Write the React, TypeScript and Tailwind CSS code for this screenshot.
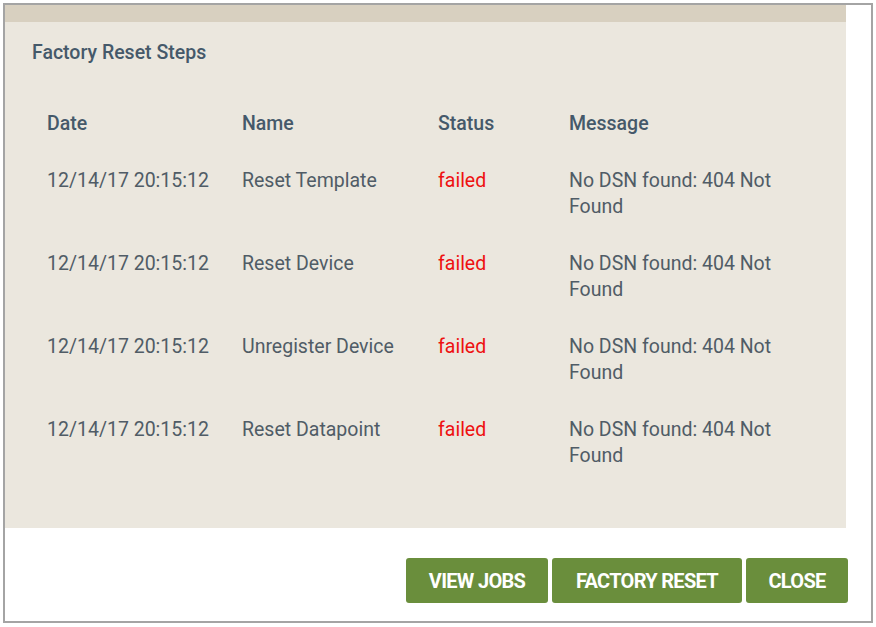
const rows = [
  { date: '12/14/17 20:15:12', name: 'Reset Template', status: 'failed', message: 'No DSN found: 404 Not Found' },
  { date: '12/14/17 20:15:12', name: 'Reset Device', status: 'failed', message: 'No DSN found: 404 Not Found' },
  { date: '12/14/17 20:15:12', name: 'Unregister Device', status: 'failed', message: 'No DSN found: 404 Not Found' },
  { date: '12/14/17 20:15:12', name: 'Reset Datapoint', status: 'failed', message: 'No DSN found: 404 Not Found' },
];

export default function App() {
  return (
    <div className="w-[876px] h-[627px] bg-white pt-[3px] pl-[3px] font-['Roboto',sans-serif]">
      <div className="w-[870px] h-[620px] border-2 border-[#a4a4a4] flex flex-col">
        <div className="h-[17px] w-[841px] bg-[#d8d0c0]" />
        <div className="w-[841px] h-[506px] bg-[#ebe7de] pt-[19px]">
          <h2 className="pl-[27px] text-[19.5px] leading-[24px] font-medium text-[#45596a]">Factory Reset Steps</h2>

          <div className="mt-[46px] pl-[42px] grid grid-cols-[195px_196px_131px_218px] text-[19.5px] leading-[26px]">
            <div className="font-medium text-[#45596a]">Date</div>
            <div className="font-medium text-[#45596a]">Name</div>
            <div className="font-medium text-[#45596a]">Status</div>
            <div className="font-medium text-[#45596a]">Message</div>
          </div>

          <div className="mt-[31px] pl-[42px] flex flex-col gap-[31px]">
            {rows.map((row) => (
              <div key={row.name} className="grid grid-cols-[195px_196px_131px_218px] text-[19.5px] leading-[26px] text-[#505c66]">
                <div>{row.date}</div>
                <div>{row.name}</div>
                <div className="text-[#ee1111]">{row.status}</div>
                <div>{row.message}</div>
              </div>
            ))}
          </div>
        </div>

        <div className="w-[843px] flex justify-end gap-[4px] pt-[30px]">
          <button className="w-[142px] h-[45px] rounded-[3px] bg-[#6a8e3c] text-white font-bold text-[20px] tracking-[-0.7px]">VIEW JOBS</button>
          <button className="w-[190px] h-[45px] rounded-[3px] bg-[#6a8e3c] text-white font-bold text-[20px] tracking-[-0.7px]">FACTORY RESET</button>
          <button className="w-[102px] h-[45px] rounded-[3px] bg-[#6a8e3c] text-white font-bold text-[20px] tracking-[-0.7px]">CLOSE</button>
        </div>
      </div>
    </div>
  );
}
